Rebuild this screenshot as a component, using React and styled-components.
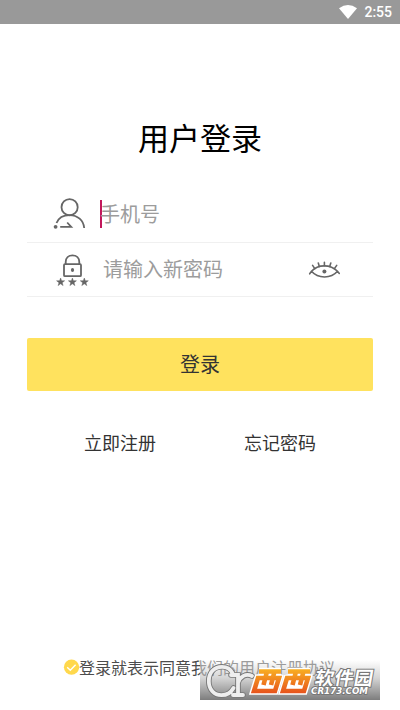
import React from "react";
import styled, { createGlobalStyle } from "styled-components";

const GlobalStyle = createGlobalStyle`
  * { box-sizing: border-box; }
  body {
    margin: 0;
    background: #fff;
    font-family: "Noto Sans CJK SC", sans-serif;
  }
`;

const Screen = styled.main`
  position: relative;
  display: flex;
  flex-direction: column;
  width: 400px;
  height: 710px;
  overflow: hidden;
  background: #fff;
`;

const StatusBar = styled.header`
  display: flex;
  align-items: center;
  justify-content: flex-end;
  gap: 7px;
  height: 24px;
  flex: none;
  padding-right: 8px;
  background: #999;
  color: #fff;
  font: 500 14px/24px Roboto, sans-serif;
`;

const Title = styled.h1`
  margin: 90px 0 0;
  height: 46px;
  font-size: 31px;
  line-height: 46px;
  font-weight: 400;
  text-align: center;
  color: #000;
`;

const Form = styled.form`
  display: flex;
  flex-direction: column;
  margin: 29px 27px 0;
`;

const Field = styled.div`
  display: flex;
  align-items: center;
  height: 54px;
  border-bottom: 1px solid #f0f0f0;
  padding: 0 32px ${(p) => p.$lift}px 26px;
`;

const FieldIcon = styled.svg`
  width: 36px;
  height: 36px;
  flex: none;
  fill: none;
  stroke: #666;
  stroke-width: 1.8;
`;

const Caret = styled.i`
  width: 2px;
  height: 28px;
  margin: 0 -2px 0 11px;
  background: #c2185b;
`;

const Placeholder = styled.span`
  flex: 1;
  margin-left: ${(p) => p.$indent}px;
  font-size: 20px;
  line-height: 30px;
  color: #9c9c9c;
`;

const EyeIcon = styled.svg`
  width: 34px;
  height: 20px;
  flex: none;
  fill: none;
  stroke: #666;
  stroke-width: 1.6;
  stroke-linecap: round;
`;

const Submit = styled.button`
  height: 53px;
  margin-top: 41px;
  padding: 0 0 1px;
  border: 0;
  border-radius: 2px;
  background: #ffe25e;
  color: #333;
  font: 400 20px/30px "Noto Sans CJK SC", sans-serif;
`;

const Links = styled.nav`
  display: grid;
  grid-template-columns: 160px 160px;
  justify-content: center;
  margin-top: 37px;
`;

const TextLink = styled.a`
  text-align: center;
  font-size: 18px;
  line-height: 28px;
  color: #333;
`;

const Agreement = styled.footer`
  display: flex;
  align-items: center;
  height: 24px;
  margin: auto 0 31px 63px;
  font-size: 16px;
  line-height: 24px;
  color: #4c4c4c;
  white-space: nowrap;
`;

const Watermark = styled.aside`
  position: absolute;
  left: 200px;
  top: 660px;
  width: 180px;
  height: 40px;
  background: linear-gradient(rgba(255, 255, 255, 0.45), rgba(190, 190, 190, 0.65) 45%, rgba(125, 125, 125, 1));
`;

const WatermarkArt = styled.svg`
  display: block;
  overflow: visible;
`;

const SiteName = styled.text`
  font: 700 19px "Noto Sans CJK SC", sans-serif;
  fill: #fff;
  stroke: #777;
  stroke-width: 2px;
  paint-order: stroke;
`;

const SiteAddress = styled.text`
  font: italic 700 9.4px "DejaVu Sans", sans-serif;
  fill: #fff;
  stroke: #777;
  stroke-width: 1.8px;
  paint-order: stroke;
`;

const INITIALS =
  "M32.5 13C30 8 26 6.8 22 6.8C13.5 6.8 8.8 13.5 8.8 21C8.8 29.5 14 35.2 21.5 35.2C27 35.2 31 32.5 33.5 28M31 15H38V35M33 35H43M38 23C40 16.5 46 13 52 16";

const XI_STROKES = "M59 11.5H81M58 18H79L75 31H54ZM67 11.5L63.5 25M74.5 11.5L71 25";

export default function App() {
  return (
    <>
      <GlobalStyle />
      <Screen>
        <StatusBar>
          <svg width="18" height="14" viewBox="0 0 18 14">
            <path d="M0 3.3Q9-3.1 18 3.3L9 14Z" fill="#fff" />
          </svg>
          <span>2:55</span>
        </StatusBar>
        <Title>用户登录</Title>
        <Form>
          <Field $lift={3}>
            <FieldIcon viewBox="0 0 36 36">
              <circle cx="16.6" cy="11.2" r="8.1" />
              <path d="M3.5 27C5.5 22 10.5 19.1 16.6 19.1C24.5 19.1 30.6 24.3 31.2 32" />
              <path d="M7.2 30.8H18.2L14.2 26.5" />
              <circle cx="2.6" cy="30.8" r="1.9" fill="#666" stroke="none" />
            </FieldIcon>
            <Caret />
            <Placeholder $indent={0}>手机号</Placeholder>
          </Field>
          <Field $lift={2}>
            <FieldIcon viewBox="0 0 36 36">
              <rect x="11" y="13.2" width="17" height="12" rx="1" />
              <path d="M12.7 13.2V11C12.7 7 15.5 4.4 19.5 4.4S26.3 7 26.3 11V13.2" />
              <ellipse cx="19.5" cy="19.1" rx="1.6" ry="2" fill="#666" stroke="none" />
              {[7.6, 19.4, 31.3].map((x) => (
                <path
                  key={x}
                  transform={`translate(${x} 31)`}
                  d="M0-4L1-1.2L4-1.2L1.6.7L2.5 3.6L0 1.8L-2.5 3.6L-1.6.7L-4-1.2L-1-1.2Z"
                  fill="#666"
                  strokeWidth="0.5"
                />
              ))}
            </FieldIcon>
            <Placeholder $indent={14}>请输入新密码</Placeholder>
            <EyeIcon viewBox="0 0 34 20">
              <path d="M4.5 12.3C11 5.1 23.5 5.1 30.5 12.3C24 19.9 11 19.9 4.5 12.3ZM4.5 12.3L2.7 14.8M30.5 12.3L32.3 14.5" />
              <path d="M7.8 9.6L5.6 6.4M12.3 7.5L11.3 4M17.4 6.7V3.2M22.7 7.5L23.8 4M27.4 9.6L29.7 6.4" />
              <circle cx="17.4" cy="12.4" r="2" fill="#666" stroke="none" />
            </EyeIcon>
          </Field>
          <Submit type="button">登录</Submit>
        </Form>
        <Links>
          <TextLink>立即注册</TextLink>
          <TextLink>忘记密码</TextLink>
        </Links>
        <Agreement>
          <svg width="16" height="16" viewBox="0 0 16 16">
            <circle cx="8.5" cy="8.2" r="7.6" fill="#ffd84c" />
            <path d="M4.2 8.2L7.3 11.2L12.6 5.7" fill="none" stroke="#fff" strokeWidth="1.4" />
          </svg>
          <span>登录就表示同意我们的用户注册协议</span>
        </Agreement>
        <Watermark>
          <WatermarkArt width="180" height="40" viewBox="0 0 180 40">
            <defs>
              <linearGradient id="orange" gradientUnits="userSpaceOnUse" x1="0" y1="9" x2="0" y2="34">
                <stop offset="0" stopColor="#f9b022" />
                <stop offset="1" stopColor="#e6501c" />
              </linearGradient>
            </defs>
            <g fill="none" strokeLinecap="round">
              <path d={INITIALS} stroke="#777" strokeWidth="5.6" />
              <path d={INITIALS} stroke="#eee" strokeWidth="3.8" />
            </g>
            {[0, 29].map((x) => (
              <g key={x} fill="none" transform={`translate(${x} 0)`}>
                <path d={XI_STROKES} fill="#fff" stroke="#fff" strokeWidth="7.5" />
                <path d={XI_STROKES} stroke="url(#orange)" strokeWidth="4.6" />
              </g>
            ))}
            <SiteName transform="translate(114 24.5) skewX(-10)" textLength="58">
              软件园
            </SiteName>
            <SiteAddress x="111" y="34" textLength="57" lengthAdjust="spacingAndGlyphs">
              CR173.COM
            </SiteAddress>
          </WatermarkArt>
        </Watermark>
      </Screen>
    </>
  );
}
